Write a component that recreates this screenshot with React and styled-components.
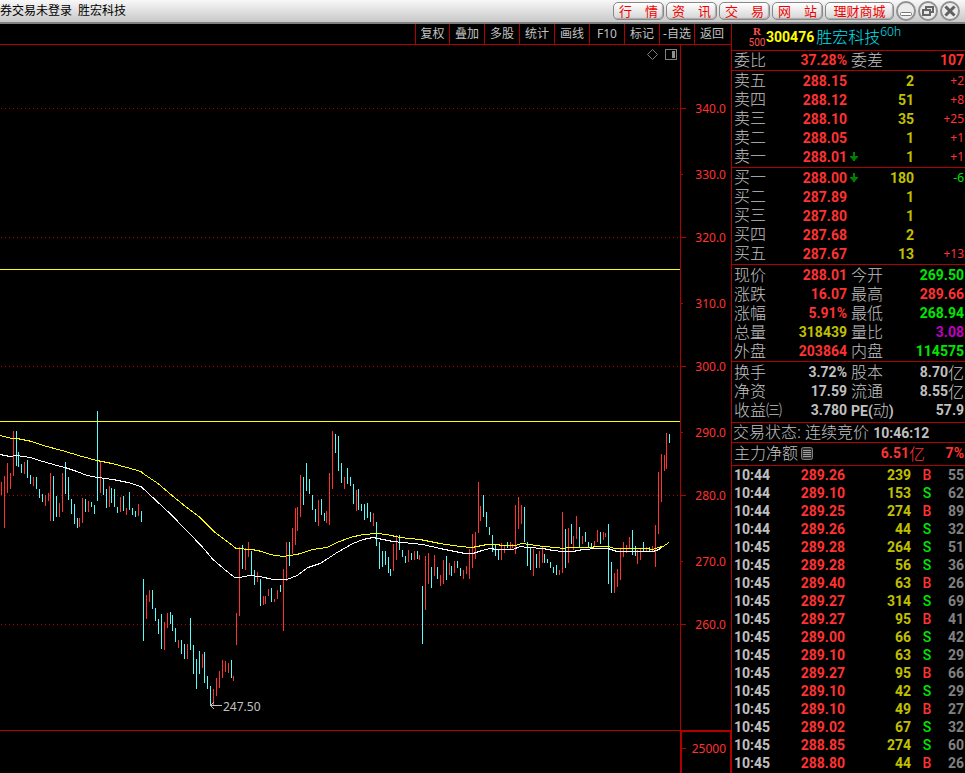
import styled, { createGlobalStyle } from 'styled-components';

const RED = '#ff3232';
const GREEN = '#00e600';
const YELLOW = '#c0c000';
const SILVER = '#c0c0c0';
const PURPLE = '#c000c0';
const LINE = '#b00000';
const CYAN = '#54fcfc';

const links = ['行　情', '资　讯', '交　易', '网　站', '理财商城'];
const tools = ['复权', '叠加', '多股', '统计', '画线', 'F10', '标记', '-自选', '返回'];

const sells = [
  ['卖五', '288.15', '2', '+2'],
  ['卖四', '288.12', '51', '+8'],
  ['卖三', '288.10', '35', '+25'],
  ['卖二', '288.05', '1', '+1'],
  ['卖一', '288.01', '1', '+1', true],
];

const buys = [
  ['买一', '288.00', '180', '-6', true],
  ['买二', '287.89', '1', ''],
  ['买三', '287.80', '1', ''],
  ['买四', '287.68', '2', ''],
  ['买五', '287.67', '13', '+13'],
];

const quotes = [
  ['现价', '288.01', RED],
  ['今开', '269.50', GREEN],
  ['涨跌', '16.07', RED],
  ['最高', '289.66', RED],
  ['涨幅', '5.91%', RED],
  ['最低', '268.94', GREEN],
  ['总量', '318439', YELLOW],
  ['量比', '3.08', PURPLE],
  ['外盘', '203864', RED],
  ['内盘', '114575', GREEN],
];

const basics = [
  ['换手', '3.72%', SILVER],
  ['股本', '8.70', SILVER, '亿'],
  ['净资', '17.59', SILVER],
  ['流通', '8.55', SILVER, '亿'],
  ['收益㈢', '3.780', SILVER],
  ['PE(动)', '57.9', SILVER],
];

const ticks = [
  ['10:44', '289.26', '239', 'B', '55'],
  ['10:44', '289.10', '153', 'S', '62'],
  ['10:44', '289.25', '274', 'B', '89'],
  ['10:44', '289.26', '44', 'S', '32'],
  ['10:45', '289.28', '264', 'S', '51'],
  ['10:45', '289.28', '56', 'S', '36'],
  ['10:45', '289.40', '63', 'B', '26'],
  ['10:45', '289.27', '314', 'S', '69'],
  ['10:45', '289.27', '95', 'B', '41'],
  ['10:45', '289.00', '66', 'S', '42'],
  ['10:45', '289.10', '63', 'S', '29'],
  ['10:45', '289.27', '95', 'B', '66'],
  ['10:45', '289.10', '42', 'S', '29'],
  ['10:45', '289.10', '49', 'B', '27'],
  ['10:45', '289.02', '67', 'S', '32'],
  ['10:45', '288.85', '274', 'S', '60'],
  ['10:45', '288.80', '44', 'B', '26'],
];

// x, high, low of every bar
const upBars = [
  [1, 482, 495], [4, 476, 528], [7, 463, 493], [10, 473, 489], [13, 431, 476], [24, 462, 474], [33, 477, 486],
  [45, 495, 506], [48, 493, 501], [50, 473, 521], [59, 503, 517], [62, 473, 512], [79, 518, 527], [82, 498, 523],
  [88, 501, 512], [100, 461, 493], [109, 486, 507], [120, 497, 512], [126, 508, 515], [138, 504, 516],
  [146, 595, 619], [149, 590, 602], [164, 622, 650], [167, 613, 628], [178, 640, 648], [187, 644, 659],
  [202, 654, 668], [213, 689, 705], [216, 678, 696], [219, 671, 688], [222, 660, 678], [225, 661, 672],
  [228, 663, 673], [233, 676, 681], [236, 613, 645], [239, 547, 616], [245, 548, 570], [248, 542, 557],
  [257, 572, 582], [263, 596, 605], [265, 596, 604], [268, 589, 596], [274, 599, 602], [277, 590, 599],
  [283, 569, 631], [286, 542, 581], [292, 528, 554], [295, 508, 545], [297, 507, 531], [300, 475, 517],
  [318, 500, 526], [326, 511, 523], [329, 473, 525], [332, 431, 489], [344, 477, 489], [356, 490, 511],
  [373, 513, 526], [393, 544, 571], [396, 535, 560], [408, 550, 562], [414, 551, 560], [419, 555, 560],
  [425, 556, 610], [428, 553, 584], [434, 555, 576], [440, 575, 586], [443, 560, 584], [449, 563, 575],
  [454, 561, 573], [463, 570, 579], [466, 566, 574], [469, 549, 579], [472, 534, 568], [475, 532, 559],
  [478, 482, 533], [480, 506, 521], [501, 543, 560], [504, 546, 553], [510, 542, 549], [512, 544, 548],
  [515, 505, 554], [518, 497, 529], [521, 505, 524], [533, 549, 576], [539, 551, 568], [542, 547, 563],
  [559, 570, 575], [562, 512, 573], [568, 528, 563], [573, 536, 550], [576, 516, 539], [582, 536, 544],
  [594, 541, 547], [597, 530, 542], [603, 532, 540], [605, 533, 537], [614, 573, 593], [617, 569, 587],
  [620, 549, 580], [623, 542, 557], [626, 545, 553], [629, 537, 548], [637, 550, 564], [640, 549, 560],
  [646, 547, 551], [652, 546, 551], [655, 525, 567], [658, 472, 534], [661, 454, 502], [664, 455, 471],
  [666, 433, 469],
];

const downBars = [
  [16, 431, 466], [18, 452, 467], [21, 464, 473], [27, 460, 478], [30, 475, 484], [36, 477, 489], [39, 489, 498],
  [42, 494, 502], [53, 476, 521], [56, 496, 517], [65, 462, 494], [68, 477, 500], [71, 499, 514], [74, 504, 524],
  [77, 518, 528], [85, 499, 512], [91, 502, 507], [94, 505, 514], [97, 411, 501], [103, 478, 495],
  [106, 489, 508], [111, 488, 503], [114, 489, 507], [117, 507, 513], [123, 496, 511], [129, 492, 510],
  [132, 508, 515], [135, 511, 517], [141, 511, 522], [143, 579, 641], [152, 590, 609], [155, 608, 621],
  [158, 619, 634], [161, 614, 649], [170, 612, 624], [172, 615, 631], [175, 628, 642], [181, 640, 654],
  [184, 644, 659], [190, 618, 650], [193, 645, 674], [196, 659, 689], [199, 651, 674], [204, 652, 683],
  [207, 676, 689], [210, 686, 706], [231, 660, 678], [242, 545, 569], [251, 551, 575], [254, 570, 585],
  [260, 579, 606], [271, 588, 602], [280, 585, 592], [289, 542, 566], [303, 477, 505], [306, 463, 491],
  [309, 479, 494], [312, 495, 510], [315, 509, 522], [321, 499, 515], [324, 513, 521], [335, 434, 453],
  [338, 436, 471], [341, 463, 483], [347, 468, 484], [350, 477, 486], [353, 484, 504], [358, 489, 510],
  [361, 504, 511], [364, 504, 520], [367, 503, 518], [370, 512, 522], [376, 522, 546], [379, 542, 569],
  [382, 551, 567], [385, 551, 565], [388, 557, 573], [390, 569, 576], [399, 535, 550], [402, 550, 557],
  [405, 556, 563], [411, 553, 560], [417, 551, 559], [422, 586, 644], [431, 567, 588], [437, 567, 579],
  [446, 556, 580], [451, 566, 576], [457, 561, 568], [460, 568, 576], [483, 495, 517], [486, 512, 527],
  [489, 527, 535], [492, 535, 552], [495, 545, 556], [498, 549, 560], [507, 542, 548], [524, 507, 542],
  [527, 542, 566], [530, 548, 570], [536, 554, 568], [544, 554, 563], [547, 559, 563], [550, 562, 568],
  [553, 567, 573], [556, 565, 575], [565, 529, 568], [571, 524, 544], [579, 527, 548], [585, 532, 542],
  [588, 542, 548], [591, 543, 549], [600, 532, 544], [608, 524, 584], [611, 562, 593], [632, 530, 555],
  [635, 546, 556], [643, 542, 551], [649, 547, 551], [669, 434, 443],
];

const slowAverage =
  '0,435 12,438 17,438 32,441 43,445 62,450 72,453 82,456 97,460 112,463 127,467 141,471 143,473 158,483 165,489 172,495 183,504 200,517 215,532 230,543 236,548 252,549 262,551 270,554 283,556 297,554 313,549 327,547 337,542 350,537 363,534 377,533 387,534 400,537 420,539 440,543 460,546 472,547 487,544 497,544 502,545 515,545 522,543 530,544 543,546 557,547 563,548 570,547 592,547 595,546 608,546 615,548 647,548 653,549 658,547 663,546 669,542';
const fastAverage =
  '0,454 10,456 17,455 30,457 43,461 57,465 65,467 77,471 87,475 98,477 113,479 128,482 141,486 171,514 202,546 213,559 227,571 235,577 239,577 250,575 260,576 273,579 287,579 297,575 308,567 320,563 328,558 337,552 353,543 363,539 373,537 383,539 393,541 403,542 423,544 440,548 455,551 465,553 473,553 482,550 490,548 497,549 513,549 520,546 528,547 543,548 553,550 563,551 573,551 583,549 598,548 608,548 617,551 653,551 659,549 663,546 669,542';

const scale = [
  [108, '340.0'], [174, '330.0'], [237, '320.0'], [303, '310.0'], [366, '300.0'],
  [432, '290.0'], [495, '280.0'], [561, '270.0'], [624, '260.0'],
];

const barPath = (bars) => bars.map(([x, high, low]) => `M${x + 0.5} ${high}V${low}`).join('');

function Chart() {
  return (
    <Plot viewBox="0 45 680 685" preserveAspectRatio="none" role="img" aria-label="K线图">
      {scale
        .filter((_, i) => i % 2 === 0)
        .map(([y]) => (
          <path key={y} d={`M1 ${y + 0.5}H680`} stroke={LINE} strokeDasharray="1 3" />
        ))}
      <path d={barPath(upBars)} stroke={RED} />
      <path d={barPath(downBars)} stroke={CYAN} />
      <path d="M0 269.5H680M0 421.5H680" stroke="#ffff00" />
      <polyline points={fastAverage} stroke="#ffffff" transform="translate(0 .5)" />
      <polyline points={slowAverage} stroke="#ffff00" transform="translate(0 .5)" />
      <path d="M210 705.5H222M214 702L210.5 705.5L214 709" stroke={SILVER} />
      <text x="223" y="711" fill={SILVER}>
        247.50
      </text>
      <path d="M652.5 49.5L657.5 54.5L652.5 59.5L647.5 54.5Z" stroke="#808080" shapeRendering="auto" />
      <rect x="665.5" y="49.5" width="11" height="10" rx="1" stroke="#808080" />
      <rect x="672" y="51" width="3" height="7" fill="#909090" />
    </Plot>
  );
}

function PriceScale() {
  return (
    <Scale viewBox="680 45 51 685" preserveAspectRatio="none">
      {scale.map(([y, label], i) => (
        <g key={label}>
          <path d={`M680 ${y + 0.5}h${i % 2 ? 3 : 6}`} stroke={LINE} />
          <text x="726" y={y + 5} textAnchor="end" fill={RED}>
            {label}
          </text>
        </g>
      ))}
      <path d="M680.5 45V730" stroke={LINE} />
    </Scale>
  );
}

function DownArrow() {
  return (
    <svg width="8" height="10" viewBox="0 0 8 10" aria-hidden="true">
      <path d="M3 0h2v4h3v1L5 8v1H3V8L0 5V4h3z" fill="#008000" />
    </svg>
  );
}

function OrderBook({ rows, label }) {
  return (
    <Section>
      <Table aria-label={label}>
        <colgroup>
          <col style={{ width: 34 }} />
          <col />
          <col style={{ width: 67 }} />
          <col style={{ width: 51 }} />
        </colgroup>
        <tbody>
          {rows.map(([name, price, volume, change, moved]) => (
            <BookRow key={name}>
              <th scope="row">{name}</th>
              <NumberCell $color={RED}>{price}</NumberCell>
              <NumberCell $color={YELLOW}>
                <Volume>
                  {moved ? <DownArrow /> : <span />}
                  {volume}
                </Volume>
              </NumberCell>
              <ChangeCell $color={change.startsWith('-') ? GREEN : RED}>{change}</ChangeCell>
            </BookRow>
          ))}
        </tbody>
      </Table>
    </Section>
  );
}

function Figures({ items }) {
  return (
    <FigureGrid>
      {items.map(([name, value, color, unit]) => (
        <Figure key={name}>
          <dt>{name.startsWith('PE') ? <><b>PE(</b>动<b>)</b></> : name}</dt>
          <Value $color={color}>
            {value}
            {unit && <Unit>{unit}</Unit>}
          </Value>
        </Figure>
      ))}
    </FigureGrid>
  );
}

function App() {
  return (
    <Page>
      <GlobalStyle />
      <TitleBar>
        <Title>
          <span>券交易未登录</span>
          <span>胜宏科技</span>
        </Title>
        <TitleActions>
          {links.map((link) => (
            <LinkButton key={link} type="button" $wide={link.length > 3}>
              {link}
            </LinkButton>
          ))}
          <RoundButton type="button" aria-label="最小化">
            <svg width="16" height="16" viewBox="0 0 16 16">
              <rect x="2.5" y="9.5" width="11" height="3" rx="1" fill="#fff" stroke="#777" />
            </svg>
          </RoundButton>
          <RoundButton type="button" aria-label="还原">
            <svg width="16" height="16" viewBox="0 0 16 16" fill="#e8e8e8" stroke="#666" strokeWidth="2">
              <path d="M6 4h7v5H6z" />
              <path d="M3 7h7v5H3z" />
            </svg>
          </RoundButton>
          <RoundButton type="button" aria-label="关闭">
            <svg width="16" height="16" viewBox="0 0 16 16">
              <path d="M4.500 4.500L11.500 11.500M11.500 4.500L4.500 11.500" stroke="#606060" strokeWidth="3" strokeLinecap="square" />
            </svg>
          </RoundButton>
        </TitleActions>
      </TitleBar>

      <Body>
        <ChartSide>
          <Toolbar>
            {tools.map((tool) => (
              <ToolButton key={tool} type="button">
                {tool}
              </ToolButton>
            ))}
          </Toolbar>
          <ChartRow>
            <Chart />
            <PriceScale />
          </ChartRow>
          <VolumeRow>
            <VolumePlot />
            <VolumeScale>
              <VolumeTick />
              25000
            </VolumeScale>
          </VolumeRow>
        </ChartSide>

        <Panel>
          <StockHeader>
            <Badge>
              <b>R</b>
              <span>500</span>
            </Badge>
            <Code>300476</Code>
            <StockName>胜宏科技</StockName>
            <Period>60h</Period>
          </StockHeader>
          <Ratio>
            <Figure>
              <dt>委比</dt>
              <Value $color={RED}>37.28%</Value>
            </Figure>
            <Figure>
              <dt>委差</dt>
              <Value $color={RED}>107</Value>
            </Figure>
          </Ratio>
          <OrderBook rows={sells} label="卖盘" />
          <OrderBook rows={buys} label="买盘" />
          <Figures items={quotes} />
          <Figures items={basics} />
          <Status>
            交易状态: 连续竞价 <b>10:46:12</b>
          </Status>
          <NetFlow>
            <span>主力净额</span>
            <svg width="12" height="13" viewBox="0 0 12 13" aria-hidden="true">
              <rect x=".5" y=".5" width="11" height="12" rx="2" fill="#303030" stroke="#808080" />
              <path d="M2 3.500h8M2 5.500h8M2 7.500h8M2 9.500h8" stroke="#a0a0a0" />
            </svg>
            <FlowAmount $color={RED}>
              6.51<Unit>亿</Unit>
            </FlowAmount>
            <FlowShare $color={RED}>7%</FlowShare>
          </NetFlow>
          <Table aria-label="成交明细">
            <colgroup>
              <col style={{ width: 60 }} />
              <col />
              <col style={{ width: 66 }} />
              <col style={{ width: 32 }} />
              <col style={{ width: 22 }} />
            </colgroup>
            <tbody>
              {ticks.map(([time, price, volume, side, count], i) => (
                <TickRow key={i}>
                  <TimeCell>{time}</TimeCell>
                  <NumberCell $color={RED}>{price}</NumberCell>
                  <NumberCell $color={YELLOW}>{volume}</NumberCell>
                  <SideCell $color={side === 'B' ? RED : GREEN}>{side}</SideCell>
                  <NumberCell $color="#808080">{count}</NumberCell>
                </TickRow>
              ))}
            </tbody>
          </Table>
        </Panel>
      </Body>
    </Page>
  );
}

const GlobalStyle = createGlobalStyle`
  * {
    box-sizing: border-box;
  }

  body {
    margin: 0;
    background: #000;
    font-family: 'Noto Sans', 'Noto Sans CJK SC', sans-serif;
    font-size: 12px;
  }

  button {
    margin: 0;
    padding: 0;
    border: 0;
    background: none;
    font: inherit;
    cursor: pointer;
  }

  dl, dd {
    margin: 0;
  }
`;

const Page = styled.main`
  display: flex;
  flex-direction: column;
  min-height: 100vh;
  color: ${SILVER};
`;

const TitleBar = styled.header`
  display: flex;
  justify-content: space-between;
  height: 24px;
  background: linear-gradient(#f8f8f8, #c8c8c8);
  border-bottom: 2px solid #808080;
  color: #000;
`;

const Title = styled.h1`
  display: flex;
  gap: 6px;
  margin: 0;
  font-size: 12px;
  font-weight: 400;
  line-height: 22px;
`;

const TitleActions = styled.div`
  display: flex;
  align-items: center;
  gap: 2px;
  padding-right: 5px;
`;

const LinkButton = styled.button`
  width: ${({ $wide }) => ($wide ? 69 : 51)}px;
  height: 18px;
  border: 1px solid #888;
  border-radius: 5px;
  background: linear-gradient(#fff, #d4d4d4);
  box-shadow: inset -1px -1px 1px #aaa;
  color: #f00000;
  font-size: 13px;
  line-height: 14px;
  white-space: nowrap;

  & + &:nth-child(5) {
    margin-right: 2px;
  }
`;

const RoundButton = styled.button`
  display: grid;
  place-items: center;
  width: 20px;
  height: 20px;
  border: 2px solid #909090;
  border-radius: 50%;
  background: #ececec;
`;

const Body = styled.div`
  flex: 1;
  display: flex;
`;

const ChartSide = styled.section`
  flex: 1;
  min-width: 0;
  display: flex;
  flex-direction: column;
`;

const Toolbar = styled.nav`
  display: flex;
  justify-content: flex-end;
  height: 21px;
  padding-right: 2px;
  border-bottom: 1px solid ${LINE};
`;

const ToolButton = styled.button`
  width: 35px;
  border-left: 1px solid ${LINE};
  color: ${SILVER};
  line-height: 20px;
  white-space: nowrap;

  &:first-child {
    width: 34px;
  }
`;

const ChartRow = styled.div`
  display: flex;
`;

const Plot = styled.svg`
  flex: 1;
  min-width: 0;
  height: 685px;
  fill: none;
  stroke-width: 1;
  shape-rendering: crispEdges;
`;

const Scale = styled.svg`
  width: 51px;
  height: 685px;
  shape-rendering: crispEdges;
`;

const VolumeRow = styled.div`
  flex: 1;
  display: flex;
`;

const VolumePlot = styled.div`
  flex: 1;
  border-top: 1px solid ${LINE};
`;

const VolumeScale = styled.div`
  display: flex;
  justify-content: space-between;
  width: 51px;
  padding: 9px 4px 0 0;
  border: 2px solid ${LINE};
  border-width: 2px 1px 0 2px;
  color: ${RED};
  line-height: 16px;
`;

const VolumeTick = styled.span`
  width: 4px;
  height: 8px;
  border-bottom: 1px solid ${LINE};
`;

const Panel = styled.aside`
  flex: 0 0 234px;
  min-width: 0;
  border-left: 1px solid ${LINE};
  font-size: 16px;
  font-weight: 300;

  b {
    font: 700 14px Roboto, sans-serif;
  }
`;

const Section = styled.div`
  padding-bottom: 1px;
  border-bottom: 1px solid ${LINE};
`;

const StockHeader = styled.h2`
  display: flex;
  align-items: center;
  height: 27px;
  margin: 0;
  padding-left: 16px;
  border-bottom: 1px solid ${LINE};
  font-size: 16px;
  font-weight: 300;
  line-height: 24px;
`;

const Badge = styled.span`
  display: flex;
  flex-direction: column;
  align-items: center;
  width: 18px;
  color: #ff5050;
  font: 10px/12px Roboto, sans-serif;

  b {
    font: 700 11px/12px 'Liberation Serif', serif;
  }
`;

const Code = styled.span`
  color: #ffff00;
  font: 700 14px Roboto, sans-serif;
`;

const StockName = styled.span`
  margin-left: 2px;
  color: #00e0f0;
`;

const Period = styled.span`
  align-self: flex-start;
  color: #00e0f0;
  font-size: 12px;
  line-height: 16px;
`;

const FigureGrid = styled.dl`
  display: grid;
  grid-template-columns: 1fr 1fr;
  column-gap: 4px;
  padding: 1px 1px 0 2px;
  border-bottom: 1px solid ${LINE};

  & + & {
    padding-bottom: 2px;
  }
`;

const Ratio = styled(FigureGrid)`
  padding-top: 0;
`;

const Figure = styled.div`
  display: flex;
  justify-content: space-between;
  line-height: 19px;
  height: 19px;
  white-space: nowrap;
`;

const Value = styled.dd`
  display: flex;
  color: ${({ $color }) => $color};
  font: 700 14px/19px Roboto, sans-serif;
`;

const Unit = styled.span`
  font: 300 16px/19px 'Noto Sans CJK SC', sans-serif;
`;

const Table = styled.table`
  width: 100%;
  table-layout: fixed;
  border-collapse: collapse;

  td,
  th {
    padding: 0;
  }

  td:last-child {
    padding-right: 1px;
  }
`;

const BookRow = styled.tr`
  height: 19px;
  line-height: 19px;

  th {
    padding-left: 2px;
    font-weight: 300;
    text-align: left;
  }
`;

const TickRow = styled.tr`
  height: 18px;
`;

const NumberCell = styled.td`
  color: ${({ $color }) => $color};
  font: 700 14px/18px Roboto, sans-serif;
  text-align: right;
`;

const Volume = styled.span`
  display: flex;
  align-items: center;
  justify-content: space-between;
  padding-left: 3px;
`;

const ChangeCell = styled.td`
  color: ${({ $color }) => $color};
  font-size: 12px;
  font-weight: 400;
  line-height: 18px;
  text-align: right;
`;

const TimeCell = styled(NumberCell)`
  text-align: left;

  ${Table} & {
    padding-left: 2px;
  }
`;

const SideCell = styled(NumberCell)`
  font-weight: 500;
  text-align: center;
`;

const Status = styled.p`
  height: 20px;
  margin: 0;
  padding-left: 1px;
  border-bottom: 1px solid ${LINE};
  line-height: 19px;
  white-space: nowrap;
`;

const NetFlow = styled.div`
  display: flex;
  align-items: center;
  gap: 3px;
  height: 23px;
  padding: 0 1px 2px 2px;
  border-bottom: 1px solid ${LINE};
  line-height: 20px;
`;

const FlowAmount = styled.span`
  display: flex;
  justify-content: flex-end;
  margin-left: auto;
  color: ${({ $color }) => $color};
  font: 700 14px/19px Roboto, sans-serif;
`;

const FlowShare = styled(FlowAmount)`
  width: 36px;
  margin-left: 0;
`;

export default App;
